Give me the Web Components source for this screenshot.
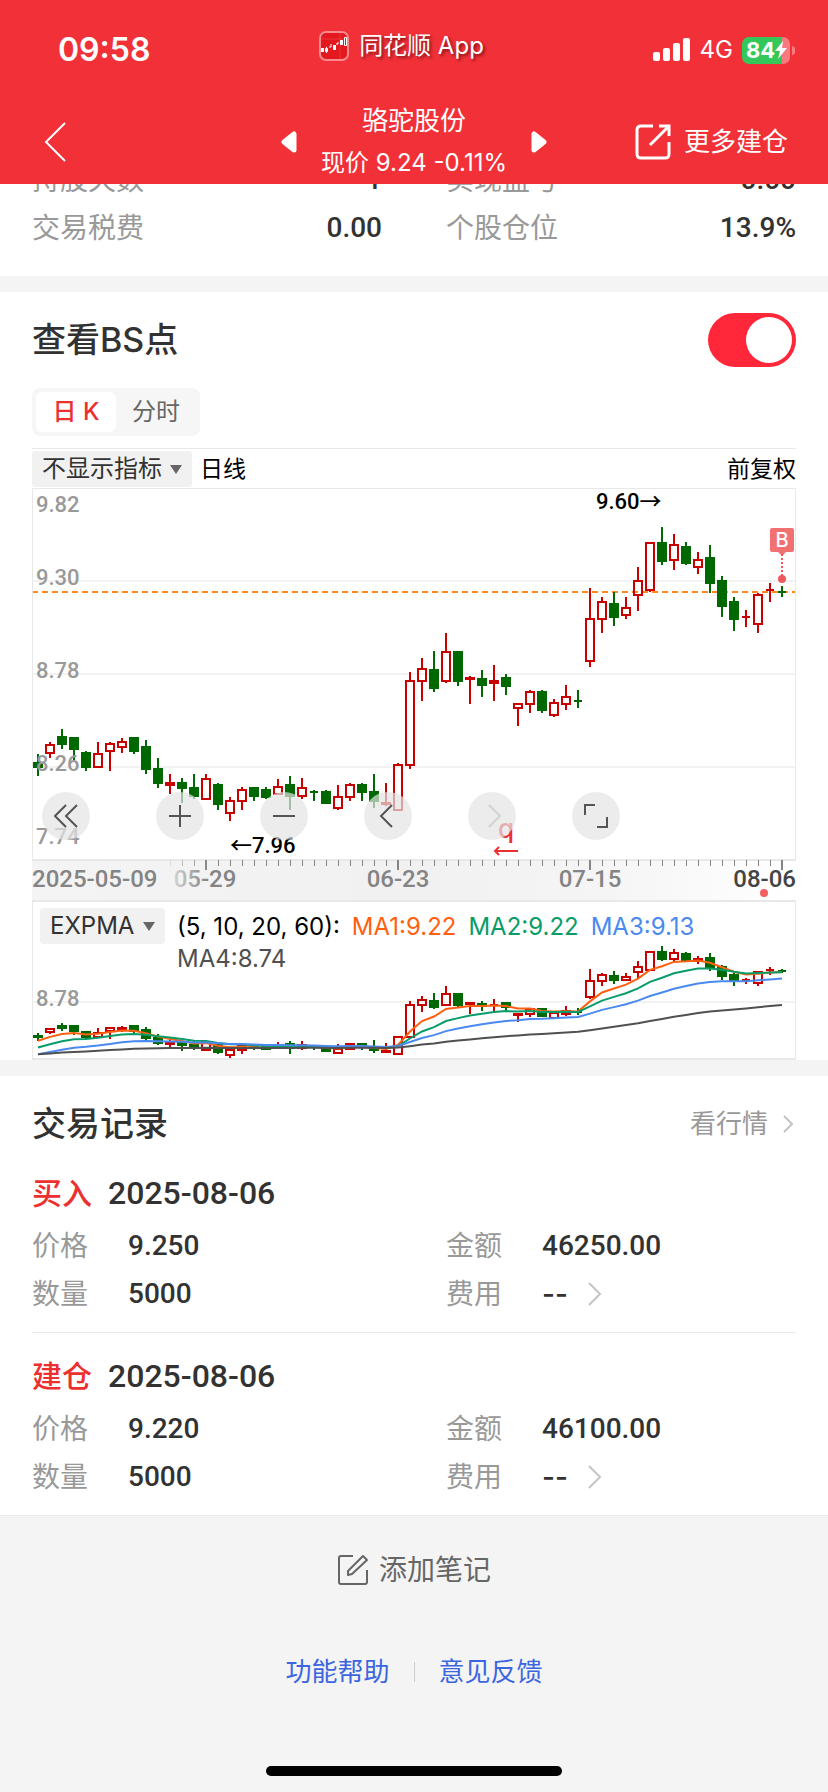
<!DOCTYPE html>
<html lang="zh-CN">
<head>
<meta charset="utf-8">
<meta name="viewport" content="width=device-width, initial-scale=1">
<title>骆驼股份</title>
<style>
    :root {
        --red: #f23038;
        --accent: #ec2f2f;
        --text: #323232;
        --muted: #999;
        --band: #f4f4f4;
        --number-font: Roboto, 'Noto Sans CJK SC', sans-serif;
    }
    * { box-sizing: border-box; }
    body {
        margin: 0;
        min-height: 100vh;
        display: flex;
        flex-direction: column;
        background: var(--band);
        color: var(--text);
        font-family: Inter, 'Noto Sans CJK SC', sans-serif;
        font-size: 28px;
        line-height: 48px;
    }
    .top { background: var(--red); color: #fff; }
    .stats {
        background: #fff;
        overflow: hidden;
        padding: 0 32px 24px;
    }
    /* the list is scrolled, its first row is half under the header */
    .stats__grid {
        display: grid;
        grid-template-columns: 1fr 1fr;
        column-gap: 64px;
        margin-top: -28px;
    }
    page-footer { flex: 1; }
</style>
</head>
<body>
    <header class="top">
        <status-bar time="09:58" network="4G" battery="84">同花顺 App</status-bar>
        <nav-bar name="骆驼股份" quote="现价 9.24 -0.11%">更多建仓</nav-bar>
    </header>

    <section class="stats">
        <div class="stats__grid">
            <stat-item label="持股天数">1</stat-item>
            <stat-item label="实现盈亏">0.00</stat-item>
            <stat-item label="交易税费">0.00</stat-item>
            <stat-item label="个股仓位">13.9%</stat-item>
        </div>
    </section>

    <page-card heading="查看BS点">
        <toggle-switch slot="action" label="查看BS点"></toggle-switch>
        <segment-tabs></segment-tabs>
        <chart-toolbar></chart-toolbar>
        <kline-chart></kline-chart>
        <expma-chart></expma-chart>
    </page-card>

    <page-card heading="交易记录">
        <more-link slot="action">看行情</more-link>
        <trade-record type="买入" date="2025-08-06" price="9.250" count="5000" amount="46250.00"></trade-record>
        <trade-record type="建仓" date="2025-08-06" price="9.220" count="5000" amount="46100.00"></trade-record>
    </page-card>

    <page-footer></page-footer>

<script>
// type, high, body top, body bottom, low
const CANDLES = [
    ['g', 8.33, 8.28, 8.26, 8.21], ['r', 8.40, 8.38, 8.34, 8.31], ['g', 8.47, 8.43, 8.39, 8.36],
    ['g', 8.42, 8.42, 8.36, 8.30], ['g', 8.35, 8.34, 8.26, 8.24], ['r', 8.40, 8.33, 8.26, 8.26],
    ['r', 8.40, 8.39, 8.35, 8.24], ['r', 8.42, 8.40, 8.37, 8.34], ['g', 8.43, 8.42, 8.35, 8.33],
    ['g', 8.41, 8.37, 8.25, 8.22], ['g', 8.31, 8.25, 8.17, 8.14], ['r', 8.22, 8.17, 8.16, 8.11],
    ['g', 8.20, 8.17, 8.14, 8.06], ['g', 8.22, 8.14, 8.10, 8.08], ['r', 8.22, 8.19, 8.08, 8.08],
    ['g', 8.17, 8.16, 8.05, 8.02], ['r', 8.09, 8.07, 8.00, 7.96], ['r', 8.15, 8.13, 8.07, 8.02],
    ['g', 8.14, 8.14, 8.10, 8.07], ['g', 8.15, 8.13, 8.09, 8.08], ['r', 8.19, 8.15, 8.11, 8.11],
    ['g', 8.21, 8.16, 8.10, 8.02], ['r', 8.20, 8.14, 8.10, 8.08], ['g', 8.13, 8.12, 8.12, 8.07],
    ['g', 8.13, 8.12, 8.06, 8.05], ['r', 8.16, 8.09, 8.03, 8.02], ['r', 8.17, 8.16, 8.09, 8.07],
    ['g', 8.17, 8.16, 8.12, 8.07], ['g', 8.22, 8.12, 8.07, 8.03], ['r', 8.17, 8.06, 8.05, 8.04],
    ['r', 8.28, 8.27, 8.02, 8.02], ['r', 8.79, 8.74, 8.27, 8.25], ['r', 8.87, 8.81, 8.74, 8.63],
    ['g', 8.91, 8.80, 8.70, 8.68], ['r', 9.01, 8.90, 8.74, 8.73], ['g', 8.91, 8.90, 8.74, 8.71],
    ['r', 8.77, 8.76, 8.75, 8.61], ['g', 8.80, 8.75, 8.72, 8.65], ['r', 8.83, 8.74, 8.73, 8.63],
    ['g', 8.78, 8.76, 8.71, 8.66], ['r', 8.62, 8.61, 8.59, 8.49], ['r', 8.69, 8.68, 8.61, 8.56],
    ['g', 8.69, 8.68, 8.58, 8.56], ['r', 8.64, 8.62, 8.55, 8.54], ['r', 8.72, 8.65, 8.61, 8.58],
    ['g', 8.69, 8.63, 8.63, 8.59], ['r', 9.26, 9.09, 8.85, 8.82], ['r', 9.21, 9.18, 9.09, 9.01],
    ['g', 9.24, 9.17, 9.10, 9.05], ['r', 9.21, 9.15, 9.11, 9.09], ['r', 9.38, 9.30, 9.22, 9.13],
    ['r', 9.52, 9.51, 9.25, 9.24], ['g', 9.60, 9.51, 9.41, 9.39], ['r', 9.56, 9.50, 9.42, 9.36],
    ['g', 9.52, 9.49, 9.40, 9.39], ['r', 9.46, 9.42, 9.38, 9.34], ['g', 9.50, 9.43, 9.29, 9.23],
    ['g', 9.33, 9.30, 9.16, 9.10], ['g', 9.21, 9.18, 9.09, 9.02], ['r', 9.14, 9.10, 9.10, 9.04],
    ['r', 9.23, 9.22, 9.06, 9.01], ['r', 9.29, 9.25, 9.25, 9.18], ['g', 9.27, 9.24, 9.24, 9.21]
]
const COLORS = { r: '#c80000', g: '#006800' }
const xOf = index => 6 + index * 12

const drawCandles = yOf => CANDLES.map(([type, high, top, bottom, low], i) => {
    const x = xOf(i)
    const color = COLORS[type]
    const [yh, yt, yb, yl] = [high, top, bottom, low].map(v => Math.round(yOf(v)))
    const height = Math.max(yb - yt, 0)
    // a flat day is a solid bar whatever its colour
    if (type === 'g' || height < 2) {
        const half = height === 0 ? 4 : 5
        return `<path d="M${x} ${yh}V${yl}" stroke="${color}" stroke-width="2"/>
            <rect x="${x - half}" y="${yt - 1}" width="${half * 2}" height="${height + 2}" fill="${color}"/>`
    }
    return `<path d="M${x} ${yh}V${yt}M${x} ${yb}V${yl}" stroke="${color}" stroke-width="2"/>
        <rect x="${x - 4}" y="${yt}" width="8" height="${height}" fill="none" stroke="${color}" stroke-width="2"/>`
}).join('')

const emaLine = (days, seed, color, yOf) => {
    let value = seed
    const points = CANDLES.map(([type, , top, bottom], i) => {
        const close = type === 'r' ? top : bottom
        if (i) value += (close - value) * 2 / (days + 1)
        return `${xOf(i)},${yOf(value).toFixed(1)}`
    })
    return `<polyline points="${points.join(' ')}" fill="none" stroke="${color}" stroke-width="2"/>`
}

class BaseElement extends HTMLElement {
    constructor() {
        super()
        this.attachShadow({ mode: 'open' })
    }

    connectedCallback() {
        const template = document.createElement('template')
        template.innerHTML = `<style>*{box-sizing:border-box}button,select{font:inherit;color:inherit;border:0;margin:0;padding:0;background:none}a{color:inherit;text-decoration:none}svg{display:block;flex:none}</style>${this.html()}`
        this.shadowRoot.innerHTML = ''
        this.shadowRoot.appendChild(template.content)
    }

    attr(name) {
        return this.getAttribute(name) || ''
    }
}

class StatusBar extends BaseElement {
    html() {
        return `
            <style>
                :host {
                    display: flex;
                    align-items: center;
                    justify-content: space-between;
                    height: 100px;
                    padding: 0 33px 0 58px;
                }
                .time { font-size: 32px; font-weight: 600; }
                .app {
                    display: flex;
                    align-items: center;
                    gap: 10px;
                    padding-bottom: 8px;
                    font-size: 24px;
                    text-shadow: 2px 2px 3px rgba(60, 0, 0, .6);
                }
                .signals { display: flex; align-items: center; gap: 9px; font-size: 24px; }
                .battery { display: flex; align-items: center; gap: 2px; }
                .battery__body {
                    display: flex;
                    align-items: center;
                    width: 48px;
                    height: 27px;
                    padding-left: 4px;
                    border-radius: 7px;
                    background: linear-gradient(90deg, #34c759 84%, #f77a80 84%);
                    font-size: 22px;
                    font-weight: 700;
                }
                .battery__cap { width: 3px; height: 9px; border-radius: 0 4px 4px 0; background: #f77a80; }
            </style>
            <span class="time">${this.attr('time')}</span>
            <span class="app">
                <svg width="30" height="30" viewBox="0 0 30 30">
                    <rect x="1" y="1" width="28" height="28" rx="6" fill="#e4191f" stroke="#f98a8d" stroke-width="2"/>
                    <path d="M2 8H28M21 2V28" stroke="#ea3538" stroke-width="1"/>
                    <path d="M2 17h3v4H2zM14 14h3v5h-3zM21 9h3v5h-3z" fill="#fff"/>
                    <path d="M6.500 17.500h2v3h-2zM7.500 16v6M10 16h2v-3M18 14v-2h2M25.500 6.500h2v8h-2z" fill="none" stroke="#fff" stroke-width="1"/>
                </svg>
                <slot></slot>
            </span>
            <span class="signals">
                <svg width="38" height="24" viewBox="0 0 38 24" fill="#fff">
                    <rect x="0" y="14" width="7" height="9" rx="2"/>
                    <rect x="10" y="10" width="7" height="13" rx="2"/>
                    <rect x="20" y="5" width="7" height="18" rx="2"/>
                    <rect x="30" y="0" width="7" height="23" rx="2"/>
                </svg>
                <span>${this.attr('network')}</span>
                <span class="battery">
                    <span class="battery__body">${this.attr('battery')}
                        <svg width="12" height="18" viewBox="0 0 12 18"><path d="M8 0 0 10h5L3 18 12 7H7z" fill="#fff"/></svg>
                    </span>
                    <span class="battery__cap"></span>
                </span>
            </span>
        `
    }
}

class NavBar extends BaseElement {
    html() {
        return `
            <style>
                :host {
                    display: grid;
                    grid-template-columns: 1fr auto 1fr;
                    align-items: center;
                    height: 84px;
                    padding: 0 40px 2px;
                }
                .back { justify-self: start; padding-left: 4px; }
                .stock { display: flex; align-items: center; gap: 24px; }
                .stock__text { text-align: center; }
                .name { font-size: 26px; line-height: 42px; margin: 0; font-weight: 400; }
                .quote { font-size: 24px; line-height: 42px; }
                .more { justify-self: end; display: flex; align-items: center; gap: 13px; font-size: 26px; }
            </style>
            <button class="back" aria-label="返回">
                <svg width="22" height="40" viewBox="0 0 22 40" fill="none" stroke="#fff" stroke-width="2"><path d="M21 1 2 20 21 39"/></svg>
            </button>
            <div class="stock">
                <button aria-label="上一只">
                    <svg width="16" height="22" viewBox="0 0 16 22"><path d="M13 3v16L3 11z" fill="#fff" stroke="#fff" stroke-width="5" stroke-linejoin="round"/></svg>
                </button>
                <div class="stock__text">
                    <h1 class="name">${this.attr('name')}</h1>
                    <div class="quote">${this.attr('quote')}</div>
                </div>
                <button aria-label="下一只">
                    <svg width="16" height="22" viewBox="0 0 16 22"><path d="M3 3v16L13 11z" fill="#fff" stroke="#fff" stroke-width="5" stroke-linejoin="round"/></svg>
                </button>
            </div>
            <button class="more">
                <svg width="36" height="36" viewBox="0 0 36 36" fill="none" stroke="#fff" stroke-width="3">
                    <path d="M18 2H6Q2 2 2 6V30Q2 34 6 34H30Q34 34 34 30V18"/>
                    <path d="M24 2H34V12M34 2 15 21"/>
                </svg>
                <slot></slot>
            </button>
        `
    }
}

class StatItem extends BaseElement {
    html() {
        return `
            <style>
                :host { display: flex; justify-content: space-between; }
                .label { color: var(--muted); }
                .value { font-family: var(--number-font); font-weight: 500; }
            </style>
            <span class="label">${this.attr('label')}</span>
            <span class="value"><slot></slot></span>
        `
    }
}

class PageCard extends BaseElement {
    html() {
        return `
            <style>
                :host {
                    display: block;
                    margin-top: 16px;
                    padding: 0 32px;
                    background: #fff;
                }
                .head { display: flex; align-items: center; justify-content: space-between; height: 96px; }
                h2 { margin: 0; font-size: 34px; font-weight: 500; }
            </style>
            <div class="head">
                <h2>${this.attr('heading')}</h2>
                <slot name="action"></slot>
            </div>
            <slot></slot>
        `
    }
}

class ToggleSwitch extends BaseElement {
    html() {
        return `
            <style>
                :host { display: block; }
                input {
                    appearance: none;
                    display: block;
                    width: 88px;
                    height: 54px;
                    margin: 0;
                    padding: 4px;
                    border-radius: 27px;
                    background: #ddd;
                }
                input::before {
                    content: '';
                    display: block;
                    width: 46px;
                    height: 46px;
                    border-radius: 50%;
                    background: #fff;
                }
                input:checked { background: #ff2739; }
                input:checked::before { margin-left: auto; }
            </style>
            <input type="checkbox" checked aria-label="${this.attr('label')}">
        `
    }
}

class SegmentTabs extends BaseElement {
    html() {
        return `
            <style>
                :host {
                    display: flex;
                    width: fit-content;
                    padding: 4px;
                    border-radius: 8px;
                    background: #f6f6f6;
                    font-size: 24px;
                    line-height: 40px;
                }
                button { width: 80px; border-radius: 6px; color: #666; }
                .active { background: #fff; color: var(--accent); font-weight: 500; }
            </style>
            <button class="active">日 K</button>
            <button>分时</button>
        `
    }
}

const SELECT_STYLE = `
    .select { position: relative; display: block; }
    select {
        appearance: none;
        display: block;
        height: 36px;
        padding: 0 30px 0 10px;
        border-radius: 4px;
        background: #f1f1f1;
        color: #323232;
        font-size: 24px;
        line-height: 36px;
    }
    .select svg { position: absolute; right: 10px; top: 14px; pointer-events: none; }
`
const SELECT_ARROW = '<svg width="12" height="9" viewBox="0 0 12 9"><path d="M0 0h12L6 9z" fill="#666"/></svg>'

class ChartToolbar extends BaseElement {
    html() {
        return `
            <style>
                ${SELECT_STYLE}
                :host {
                    display: flex;
                    align-items: center;
                    gap: 8px;
                    height: 40px;
                    margin-top: 12px;
                    border-top: 1px solid #e8e8e8;
                    color: #000;
                    font-size: 23px;
                    line-height: 36px;
                }
                .adjust { margin-left: auto; }
            </style>
            <label class="select"><select aria-label="主图指标"><option>不显示指标</option></select>${SELECT_ARROW}</label>
            <span>日线</span>
            <span class="adjust">前复权</span>
        `
    }
}

class KlineChart extends BaseElement {
    html() {
        const yOf = price => (9.82 - price) * 178.8
        const grid = [9.30, 8.78, 8.26].map(p => `<path d="M0 ${Math.round(yOf(p))}H764" stroke="#f2f2f2" stroke-width="2"/>`).join('')
        const labels = [['9.82', 24], ['9.30', 97], ['8.78', 190], ['8.26', 283], ['7.74', 356]]
            .map(([t, y]) => `<text x="4" y="${y}">${t}</text>`).join('')
        const ticks = CANDLES.map((c, i) => i < 11 ? '' : (i - 14) % 16 === 0
            ? `<rect x="${xOf(i) - 1}" y="372" width="2" height="10"/>`
            : `<rect x="${xOf(i)}" y="372" width="1" height="6"/>`).join('')
        return `
            <style>
                :host { display: block; position: relative; font-family: var(--number-font); font-weight: 500; }
                .plot { width: 100%; height: auto; }
                .tools { position: absolute; left: 10px; right: 0; bottom: 60px; display: flex; gap: 56px; }
                .tools button {
                    display: grid;
                    place-items: center;
                    width: 48px;
                    height: 48px;
                    border-radius: 50%;
                    background: rgba(228, 228, 228, .7);
                }
                .tools button:first-child { margin-right: 10px; }
            </style>
            <svg class="plot" viewBox="0 0 764 412">
                <defs>
                    <linearGradient id="fade" gradientUnits="userSpaceOnUse" x1="128" y1="0" x2="176" y2="0">
                        <stop offset="0" stop-color="#848484" stop-opacity="0"/>
                        <stop offset="1" stop-color="#848484"/>
                    </linearGradient>
                    <linearGradient id="strip">
                        <stop offset="0" stop-color="#f4f4f4"/>
                        <stop offset=".5" stop-color="#f1f1f1"/>
                        <stop offset=".75" stop-color="#f5f5f5"/>
                        <stop offset="1" stop-color="#fff"/>
                    </linearGradient>
                </defs>
                <rect y="372" width="764" height="40" fill="url(#strip)"/>
                <g shape-rendering="crispEdges">
                    ${grid}
                    <path d="M0 104H764" stroke="#ff8a24" stroke-width="2" stroke-dasharray="6 4"/>
                    ${drawCandles(yOf)}
                    <rect x="0" y="0" width="764" height="372" fill="none" stroke="#e8e8e8" stroke-width="2"/>
                    <g fill="url(#fade)">${ticks}</g>
                </g>
                <g font-size="22" fill="#999">${labels}</g>
                <g font-size="22" fill="#000">
                    <text x="564" y="21">9.60→</text>
                    <text x="198" y="365">←7.96</text>
                </g>
                <g font-size="24" fill="#848484">
                    <text x="0" y="399">2025-05-09</text>
                    <text x="173" y="399" text-anchor="middle" fill="url(#fade)">05-29</text>
                    <text x="366" y="399" text-anchor="middle">06-23</text>
                    <text x="558" y="399" text-anchor="middle">07-15</text>
                    <text x="764" y="399" text-anchor="end" fill="#444">08-06</text>
                </g>
                <circle cx="732" cy="405" r="4" fill="#f56060"/>
                <rect x="738" y="40" width="24" height="24" rx="2" fill="#f17072"/>
                <path d="M746 64h8l-4 4z" fill="#f17072"/>
                <text x="750" y="59" text-anchor="middle" font-size="20" font-family="Inter" fill="#fff">B</text>
                <path d="M750 66V88" stroke="#f05a5c" stroke-width="2" stroke-dasharray="2 2"/>
                <circle cx="750" cy="91" r="4" fill="#f05a5c"/>
                <text x="466" y="350" font-size="26" font-family="Inter" fill="#ec2f2f">q</text>
                <path d="M486 363H463M467 359l-4 4 4 4" fill="none" stroke="#ec2f2f" stroke-width="2"/>
            </svg>
            <div class="tools">
                <button aria-label="最早">${this.icon('M23 1 12 12 23 23M12 1 1 12 12 23')}</button>
                <button aria-label="放大">${this.icon('M1 12H23M12 1V23')}</button>
                <button aria-label="缩小">${this.icon('M1 12H23')}</button>
                <button aria-label="前移">${this.icon('M16 1 5 12 16 23')}</button>
                <button aria-label="后移">${this.icon('M9 1 20 12 9 23', '#d2d2d2')}</button>
                <button aria-label="全屏">${this.icon('M1 11V1H11M13 23H23V13')}</button>
            </div>
        `
    }

    icon(path, color = '#555') {
        return `<svg width="24" height="24" viewBox="0 0 24 24" fill="none" stroke="${color}" stroke-width="2"><path d="${path}"/></svg>`
    }
}

class ExpmaChart extends BaseElement {
    html() {
        const yOf = price => 102 - (price - 8.78) * 67.9
        return `
            <style>
                ${SELECT_STYLE}
                :host { display: block; position: relative; }
                .plot { width: 100%; height: auto; }
                .legend {
                    position: absolute;
                    left: 8px;
                    right: 8px;
                    top: 8px;
                    display: flex;
                    gap: 12px;
                    font-size: 24px;
                    line-height: 32px;
                }
                .values { display: flex; flex-wrap: wrap; column-gap: 12px; padding: 3px 80px 0 0; }
            </style>
            <svg class="plot" viewBox="0 0 764 160">
                <g shape-rendering="crispEdges">
                    <path d="M0 102H764" stroke="#f2f2f2" stroke-width="2"/>
                    ${drawCandles(yOf)}
                    <rect x="0" y="1" width="764" height="158" fill="none" stroke="#e8e8e8" stroke-width="2"/>
                </g>
                ${emaLine(5, 8.21, '#ff6010', yOf)}
                ${emaLine(10, 8.11, '#0a9c68', yOf)}
                ${emaLine(20, 8.01, '#4a8af0', yOf)}
                ${emaLine(60, 8.01, '#505050', yOf)}
                <text x="4" y="106" font-family="Roboto" font-weight="500" font-size="22" fill="#999">8.78</text>
            </svg>
            <div class="legend">
                <label class="select"><select aria-label="副图指标"><option>EXPMA</option></select>${SELECT_ARROW}</label>
                <div class="values">
                    <span style="color:#000">(5, 10, 20, 60):</span>
                    <span style="color:#ff6010">MA1:9.22</span>
                    <span style="color:#0a9c68">MA2:9.22</span>
                    <span style="color:#4a8af0">MA3:9.13</span>
                    <span style="color:#505050">MA4:8.74</span>
                </div>
            </div>
        `
    }
}

class MoreLink extends BaseElement {
    html() {
        return `
            <style>
                :host { display: block; padding-right: 3px; font-size: 26px; color: var(--muted); }
                a { display: flex; align-items: center; gap: 15px; }
            </style>
            <a href="#">
                <slot></slot>
                <svg width="10" height="18" viewBox="0 0 10 18" fill="none" stroke="#c4c4c4" stroke-width="2"><path d="M1 1 9 9 1 17"/></svg>
            </a>
        `
    }
}

class TradeRecord extends BaseElement {
    html() {
        return `
            <style>
                :host { display: block; padding: 22px 0 14px; }
                :host(:first-of-type) { padding-top: 0; border-bottom: 1px solid #e8e8e8; }
                .title { display: flex; gap: 16px; align-items: center; margin-bottom: 8px; line-height: 42px; }
                .type { color: var(--accent); font-size: 30px; font-weight: 500; }
                .date { font-family: var(--number-font); font-size: 32px; font-weight: 500; }
                dl { display: grid; grid-template-columns: 1fr 1fr; column-gap: 64px; margin: 0; }
                .cell { display: flex; }
                dt { width: 96px; color: var(--muted); }
                dd { margin: 0; font-family: var(--number-font); font-weight: 500; }
                .fee { display: flex; align-items: center; gap: 20px; font-family: Inter, sans-serif; }
            </style>
            <div class="title">
                <span class="type">${this.attr('type')}</span>
                <span class="date">${this.attr('date')}</span>
            </div>
            <dl>
                <div class="cell"><dt>价格</dt><dd>${this.attr('price')}</dd></div>
                <div class="cell"><dt>金额</dt><dd>${this.attr('amount')}</dd></div>
                <div class="cell"><dt>数量</dt><dd>${this.attr('count')}</dd></div>
                <div class="cell"><dt>费用</dt><dd><a class="fee" href="#">--
                    <svg width="14" height="24" viewBox="0 0 14 24" fill="none" stroke="#c4c4c4" stroke-width="2"><path d="M1 1 12 12 1 23"/></svg>
                </a></dd></div>
            </dl>
        `
    }
}

class PageFooter extends BaseElement {
    html() {
        return `
            <style>
                :host {
                    display: flex;
                    flex-direction: column;
                    align-items: center;
                    padding: 30px 32px 16px;
                    border-top: 1px solid #ececec;
                }
                .note { display: flex; align-items: center; gap: 10px; color: #666; }
                .links { display: flex; align-items: center; gap: 24px; margin-top: 54px; font-size: 26px; color: #3c66e0; }
                .links i { width: 1px; height: 20px; background: #ccc; }
                .home { width: 296px; height: 10px; margin-top: auto; border-radius: 5px; background: #000; }
            </style>
            <button class="note">
                <svg width="32" height="32" viewBox="0 0 32 32" fill="none" stroke="#666" stroke-width="2">
                    <path d="M16 2H4Q2 2 2 4V28Q2 30 4 30H28Q30 30 30 28V16"/>
                    <path d="M11 21v-4L26 2l4 4-15 14z" stroke-linejoin="round"/>
                </svg>
                添加笔记
            </button>
            <nav class="links"><a href="#">功能帮助</a><i></i><a href="#">意见反馈</a></nav>
            <div class="home"></div>
        `
    }
}

customElements.define('status-bar', StatusBar)
customElements.define('nav-bar', NavBar)
customElements.define('stat-item', StatItem)
customElements.define('page-card', PageCard)
customElements.define('toggle-switch', ToggleSwitch)
customElements.define('segment-tabs', SegmentTabs)
customElements.define('chart-toolbar', ChartToolbar)
customElements.define('kline-chart', KlineChart)
customElements.define('expma-chart', ExpmaChart)
customElements.define('more-link', MoreLink)
customElements.define('trade-record', TradeRecord)
customElements.define('page-footer', PageFooter)
</script>
</body>
</html>
